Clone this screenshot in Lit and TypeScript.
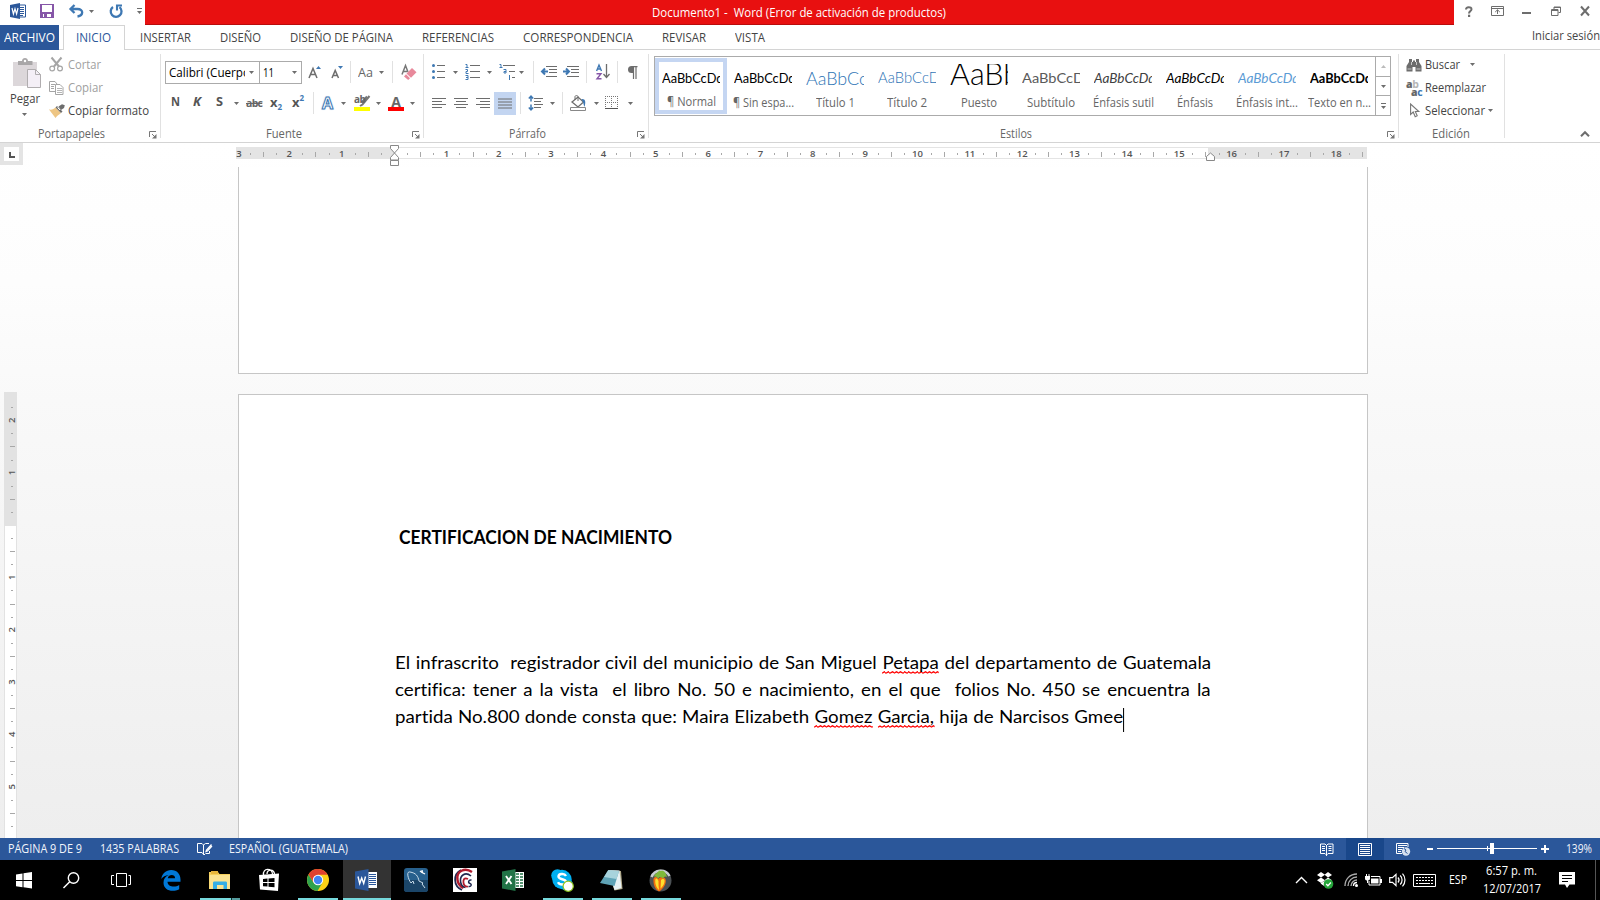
import { LitElement, html, svg, css } from "lit";
import { customElement, property } from "lit/decorators.js";
import { styleMap } from "lit/directives/style-map.js";

/** A run of text condensed or stretched to a given advance width. */
@customElement("fit-text")
class FitText extends LitElement {
  @property({ type: Number }) w = 0;
  @property() text = "";
  static styles = css`
    :host { display: block; white-space: pre; flex: none; }
    span { display: inline-block; transform-origin: 0 50%; white-space: pre; }
  `;
  render() {
    return html`<span>${this.text}</span>`;
  }
  updated() {
    const s = this.renderRoot.querySelector("span") as HTMLElement;
    s.style.transform = "none";
    const n = s.getBoundingClientRect().width;
    this.style.width = this.w + "px";
    if (n) s.style.transform = `scaleX(${this.w / n})`;
  }
}

const t = (text: string, w: number, cls = "") =>
  html`<fit-text class=${cls} .text=${text} .w=${w}></fit-text>`;

const icon = (w: number, h: number, body: unknown, cls = "") =>
  html`<svg class="ic ${cls}" width=${w} height=${h} viewBox="0 0 ${w} ${h}" fill="none">${body}</svg>`;

const arrow = () => icon(5, 3, svg`<path d="M0 0h5L2.500 3z" fill="#6d6d6d"/>`);
const sep = () => html`<i class="vsep"></i>`;
const launcher = () => icon(8, 8, svg`<path d="M.5 6V.5H7" stroke="#777"/><path d="M3 3l3.500 3.500" stroke="#777"/><path d="M7.500 3v4.500H3z" fill="#777"/>`, "launch");

const I = {
  word: icon(16, 16, svg`<path d="M8 2h7.500v12H8" stroke="#2b579a" fill="#fff"/><path d="M9 4.500h5M9 6.500h5M9 8.500h5M9 10.500h5M9 12.500h4" stroke="#2b579a"/><path d="M0 2l10-2v16L0 14z" fill="#2b579a"/><path d="M2 5l1.400 6L5 5.800 6.600 11 8 5" stroke="#fff" stroke-width="1.200"/>`),
  save: icon(14, 14, svg`<path d="M0 0h14v14H0z" fill="#8656a8"/><path d="M2 1h10v7H2z" fill="#fff"/><path d="M3 10h8v3H3z" fill="#fff"/><path d="M4 10h3v3H4z" fill="#8656a8"/>`),
  undo: icon(15, 14, svg`<path d="M5.500 1L1.500 5l4 4M2 5h6.500C15 5 14.500 11.500 8.500 12.500" stroke="#3e78b3" stroke-width="2.300"/>`),
  redo: icon(15, 14, svg`<path d="M4 3A5.400 5.400 0 1 0 10.500 3.200" stroke="#3e78b3" stroke-width="2.300"/><path d="M8 6.500V1.500h5" stroke="#3e78b3" stroke-width="2.100"/>`),
  qat: icon(5, 6, svg`<path d="M0 .5h5" stroke="#6d6d6d"/><path d="M0 3h5L2.500 6z" fill="#6d6d6d"/>`),
  help: icon(8, 11, svg`<path d="M1 3.500C1 .4 6.500.4 6.500 3.200 6.500 5 4 5 4 7.500" stroke="#6d6d6d" stroke-width="2"/><path d="M3 8.700h2.200V11H3z" fill="#6d6d6d"/>`),
  ribbonOpt: icon(13, 10, svg`<path d="M.5.500h12v9H.5zM1 2.500h11" stroke="#6d6d6d"/><path d="M6.500 8V4M4.200 6l2.300-2.200L8.800 6" stroke="#6d6d6d"/>`),
  min: icon(9, 10, svg`<path d="M0 7h9" stroke="#6d6d6d" stroke-width="2"/>`),
  restore: icon(10, 10, svg`<path d="M3 3V1h6.500v5.500H7.500M3 1.500h6.500" stroke="#6d6d6d"/><path d="M.5 3.500h6.500v6H.5zM.5 4.500H7" stroke="#6d6d6d"/>`),
  close: icon(10, 10, svg`<path d="M1 .5l8 9M9 .5l-8 9" stroke="#6d6d6d" stroke-width="2"/>`),
  paste: icon(28, 31, svg`<path d="M0 4h24v24H0z" fill="#dcd7da"/><path d="M5 3h4c0-4 6-4 6 0h4.500v4H5z" fill="#a9a7a8"/><circle cx="12" cy="3" r="1.200" fill="#fff"/><path d="M14.500 11.500h8l5 5v13h-13z" fill="#f4eff6" stroke="#b0adaf"/><path d="M22.500 11.500v5h5" stroke="#b0adaf"/>`),
  cut: icon(15, 15, svg`<path d="M2.500.500L10 9.500M12.500.500L5 9.500" stroke="#a5a5a5" stroke-width="2"/><circle cx="3.200" cy="11.500" r="2.400" stroke="#a5a5a5" stroke-width="1.200"/><circle cx="11" cy="11.500" r="2.400" stroke="#a5a5a5" stroke-width="1.200"/>`),
  copy: icon(15, 14, svg`<path d="M6 10.500H.5V.500H6L8 3" stroke="#a5a5a5"/><path d="M2 3.500h4M2 5.500h3M2 7.500h3" stroke="#a5a5a5"/><path d="M6.500 3.500H11l3 3v7H6.500z" stroke="#a5a5a5" fill="#fff"/><path d="M8 7.500h5M8 9.500h5M8 11.500h5" stroke="#b5b5b5"/>`),
  brush: icon(16, 14, svg`<path d="M0 5.500C3 6 5 5 6.500 3.500L12 9c-2 1.500-4 3-5.500 5z" fill="#eec684"/><path d="M6.500 3.500L12 9l1.500-1.500L8 2z" fill="#6d6d6d"/><path d="M9.500 2.500L13 .3 15.800 1.200 15 4l-3 2z" fill="#6d6d6d"/><path d="M8.500 3.500l2.500 2.500" stroke="#fff"/>`),
  grow: icon(14, 14, svg`<path d="M1 13L5 3.500 9 13M2.500 9.500h5" stroke="#6d6d6d" stroke-width="1.500"/><path d="M8 4l2.500-3L13 4z" fill="#3e78b3"/>`),
  shrink: icon(14, 14, svg`<path d="M1 13L4.200 5.500 7.500 13M2 10.500h4.500" stroke="#6d6d6d" stroke-width="1.500"/><path d="M7 1h5L9.500 4z" fill="#3e78b3"/>`),
  eraser: icon(16, 16, svg`<path d="M1 10.500L4.500 1.500 7 8M2 7.500h4" stroke="#777" stroke-width="1.500"/><path d="M5.500 9.500l5.500-5.500 4.500 4.200-5.500 5.500z" fill="#e8899b"/><path d="M3 12.500l2-2.200 4 4-1.800 1.700z" fill="#e8899b"/>`),
  abc: html`<span class="strike">abc</span>`,
  hilite: icon(17, 16, svg`<path d="M15.500 1L8.500 9.500 6 11M13 1.500L8 7" stroke="#777" stroke-width="2"/><path d="M0 12h16v4H0z" fill="#ff0"/>`),
  bullets: icon(14, 16, svg`<path d="M5 1.500h8M5 7.500h8M5 13.500h8" stroke="#6d6d6d"/><circle cx="1.500" cy="1.500" r="1.500" fill="#3e78b3"/><circle cx="1.500" cy="7.500" r="1.500" fill="#3e78b3"/><circle cx="1.500" cy="13.500" r="1.500" fill="#3e78b3"/>`),
  nums: icon(16, 16, svg`<path d="M5 1.500h10M5 7.500h10M5 13.500h10" stroke="#6d6d6d"/><path d="M.5.500H2v3.500M.5 3.500h3M.5 5.500h2v2H1v2h2.500M.5 11.500h2.500v4h-2.500M1 13.500h2" stroke="#3e78b3"/>`),
  multi: icon(17, 16, svg`<path d="M4 1.500h12M10 7.500h6M13 13.500h3" stroke="#6d6d6d"/><path d="M.5.500H2v3M.5 3.500h3M4.500 5.500h2.500v3.500H5V7.500h2M10.500 11v5M10 11.500h1" stroke="#3e78b3"/>`),
  outdent: icon(16, 12, svg`<path d="M5 .5h11M8 3.500h8M8 6.500h8M5 10.500h11" stroke="#6d6d6d"/><path d="M7 5.500H1M4 2.500L1 5.500l3 3" stroke="#3e78b3" stroke-width="2"/>`),
  indent: icon(16, 12, svg`<path d="M4 .5h12M8 3.500h8M8 6.500h8M4 10.500h12" stroke="#6d6d6d"/><path d="M0 5.500h6M3 2.500l3 3-3 3" stroke="#3e78b3" stroke-width="2"/>`),
  sort: icon(14, 16, svg`<path d="M.6 7L3 1l2.500 6M1.500 5h3" stroke="#3e78b3" stroke-width="1.400"/><path d="M.500 9.700h4.500L1 14.800h4.500" stroke="#8656a8" stroke-width="1.400"/><path d="M10.500 0v13M7.500 10l3 3.500 3-3.500" stroke="#6d6d6d" stroke-width="1.300"/>`),
  pil: icon(11, 13, svg`<path d="M10.500.600H5M6.500.500V13M9 .5V13" stroke="#6d6d6d" stroke-width="1.200"/><path d="M6.500 0H4.500a3.500 3.500 0 0 0 0 7h2z" fill="#6d6d6d"/>`),
  left: icon(14, 12, svg`<path d="M0 1.500h14M0 4.500h10M0 7.500h14M0 10.500h10" stroke="#6d6d6d"/>`),
  center: icon(14, 12, svg`<path d="M0 1.500h14M2 4.500h10M0 7.500h14M2 10.500h10" stroke="#6d6d6d"/>`),
  right: icon(14, 12, svg`<path d="M0 1.500h14M4 4.500h10M0 7.500h14M4 10.500h10" stroke="#6d6d6d"/>`),
  just: icon(14, 12, svg`<path d="M0 1h14M0 4h14M0 7h14M0 10h14" stroke="#6d6d6d"/>`),
  spacing: icon(15, 16, svg`<path d="M6 3.500h9M6 6.500h7M6 9.500h9M6 12.500h7" stroke="#6d6d6d"/><path d="M3 1v5.500M.8 3.500L3 1.200l2.200 2.300M3 9.500V15M.8 12.500L3 14.800l2.200-2.300" stroke="#3e78b3" stroke-width="1.500"/>`),
  bucket: icon(17, 16, svg`<path d="M2 7l6-5 5.500 5L8 12z" stroke="#6d6d6d" stroke-width="1.300" fill="#fff"/><path d="M5 5V1.500C5 .3 8 .3 8 1.500V6" stroke="#6d6d6d"/><path d="M11.500 4c4-.5 4.500 3 3 8-1-2-1-4-1.500-5z" fill="#3e78b3"/><path d="M.5 12.500h15v3H.5z" stroke="#888" fill="#fff"/>`),
  borders: icon(14, 14, svg`<path d="M.5 0v12M6.500 0v12M12.500 0v12M0 .5h13M0 6.500h13" stroke="#777" stroke-dasharray="1 1"/><path d="M0 12.500h13" stroke="#555"/>`),
  find: icon(16, 14, svg`<path d="M3 1h3v3h1V2.500h2V4h1V1h3v3l2.500 4v5.500H9.500V9h-3v4.500H.5V8L3 4z" fill="#6d6d6d"/><path d="M1.500 11h4M10.500 11h4M5.500 4v3M10.500 4v3" stroke="#ddd" stroke-width=".8"/>`),
  cursor: icon(10, 15, svg`<path d="M.6 1v10.500L3.200 9l2 4.700 2-.9L5.300 8.500h3.500z" stroke="#777" stroke-width="1.100" fill="#fff"/>`),
  collapse: icon(10, 6, svg`<path d="M1 5.200l4-4 4 4" stroke="#6d6d6d" stroke-width="2"/>`),
  proof: icon(16, 14, svg`<path d="M6.500 12V3L5 1.500H.500v9H5L7 13l1.500-1.500M6.500 3L8.500 1.500H12M12.500 9v2.500H9" stroke="#fff"/><path d="M14.500 2.500L9.500 8l-.5 1.500 1.500-.5 4.500-5" stroke="#fff" stroke-width="1.200"/>`),
  read: icon(14, 13, svg`<path d="M6.500 2v11M6.500 2.500L5 1H.500v9.500H5l1.500 1.500L8 10.500h5V1H8z" stroke="#fff"/><path d="M2 3.500h3M2 5.500h3M2 7.500h3M8.500 3.500h3M8.500 5.500h3M8.500 7.500h3" stroke="#fff"/>`),
  print: icon(14, 13, svg`<path d="M.5.500h13v12H.5z" stroke="#fff"/><path d="M2 2.500h10M2 4.500h10M2 6.500h10M2 8.500h10M2 10.500h10" stroke="#fff"/>`),
  web: icon(15, 13, svg`<path d="M12 4V.500H.500v10H6" stroke="#fff"/><path d="M2 2.500h9M2 4.500h6M2 6.500h4M2 8.500h3" stroke="#fff"/><circle cx="10" cy="8.500" r="4.200" fill="#d5e0ef"/><path d="M8 5.500l2 1.500-1 1.500 2.500 2" stroke="#2b579a" stroke-width="1"/>`),
};

const APPS = {
  win: icon(17, 17, svg`<path d="M0 2.500l6.500-1V8H0zM7.500 1.300L16 0v8H7.500zM0 9h6.500v6.300L0 14.300zM7.500 9H16v7.500l-8.500-1.200z" fill="#fff"/>`),
  search: icon(17, 17, svg`<circle cx="10.500" cy="6" r="5.200" stroke="#fff" stroke-width="1.400"/><path d="M6.700 9.800L.5 16" stroke="#fff" stroke-width="1.500"/>`),
  task: icon(20, 14, svg`<path d="M5.500.500h10v13h-10zM3 2.500H.500v9H3M17.500 2.500h2v9h-2" stroke="#fff"/>`),
  edge: icon(20, 21, svg`<path d="M.3 9C1 3.500 5 0 10.200 0 16 0 19.500 4.200 19.500 9.500v2.200H6.500c.2 5.300 7.500 6 11.700 3.300v4.200C11 23 2.500 20 2.500 12.700c0-3.600 2-6.200 5.200-7.600C4.500 5.500 1.700 7 .3 9zM6.800 8.200h7.300c0-4.500-6.600-4.300-7.300 0z" fill="#0078d7"/>`),
  folder: icon(22, 19, svg`<path d="M0 1h9l1.500 2H21v15H0z" fill="#f5cf5b"/><path d="M2 0h7v3H2z" fill="#e8b63b"/><path d="M.5 4H21v14H.5z" fill="#fbe391"/><path d="M4 18v-6c0-1 .5-1.500 1.500-1.500h11c1 0 1.500.5 1.500 1.500v6H14.500v-4H8v4z" fill="#35aee6"/>`),
  store: icon(22, 24, svg`<path d="M1 7l20-1.500L20 23 2 21.500z" fill="#fff"/><path d="M5.500 7C4.500-.5 14 0 14.500 6M9 6C9 .5 16 1 16.500 6" stroke="#fff" stroke-width="1.300"/><path d="M5 11l4.500-.5V14H5zM10.500 10.400l6-.5V14h-6zM5 15h4.500v3.600L5 18.200zM10.500 15h6v4.300l-6-.6z" fill="#000"/>`),
  chrome: icon(22, 22, svg`<circle cx="11" cy="11" r="11" fill="#fcd116"/><path d="M1.500 5.500A11 11 0 0 0 10.500 22L15.500 13.500 11 11 6.500 13.600z" fill="#2fa24d"/><path d="M1.500 5.500L6.500 13.600 11 11V5.800h9.600A11 11 0 0 0 1.500 5.500z" fill="#e0412f"/><circle cx="11" cy="11" r="5.200" fill="#fff"/><circle cx="11" cy="11" r="4.200" fill="#4284f3"/>`),
  word: icon(23, 22, svg`<path d="M12 3h10v16H12z" fill="#fff"/><path d="M14 5.500h7M14 7.500h7M14 9.500h7M14 11.500h7M14 13.500h7M14 15.500h7" stroke="#2b579a"/><path d="M0 2.500L13.500 0v22L0 19.500z" fill="#2b579a"/><path d="M3 7.500l1.700 7L6.700 9l2 5.500 1.800-7" stroke="#fff" stroke-width="1.400"/>`),
  mysql: icon(24, 24, svg`<rect width="24" height="24" rx="3" fill="#27608d"/><path d="M0 12h24v9a3 3 0 0 1-3 3H3a3 3 0 0 1-3-3z" fill="#1b4568"/><path d="M7 15c-3-4-5-12-1-11 6 1 8 4 9 9l4 2-1 1 3 4M7 15l2-2 1 3" stroke="#c9dcea" stroke-width="1"/><path d="M16 3l2 1.500L21 6M18 2l.5 3" stroke="#fff" stroke-width="1.300"/>`),
  cs: icon(24, 24, svg`<path d="M0 0h24v24H0z" fill="#fff"/><path d="M8 2C0 6 0 18 9 22" stroke="#20284f" stroke-width="1.800"/><path d="M19 4C12-1 3 3 4.500 12c.5 4 3 6.500 6 8" stroke="#b01c2e" stroke-width="2.400"/><path d="M18 8C12 3 7 8 7.500 13c.3 4 2.500 6 5 6.500" stroke="#20284f" stroke-width="1.600"/><path d="M15 11c-4-2-5 1-4.500 4 .5 3 2.500 4 4.500 3.500" stroke="#b01c2e" stroke-width="1.800"/><path d="M18.500 12c-3.500-.5-3.500 3-1.500 3.500s1.500 3.500-1.500 3" stroke="#20284f" stroke-width="1.500"/>`),
  excel: icon(23, 22, svg`<path d="M12 3h10v16H12z" fill="#fff"/><path d="M14 5h3M18 5h3M14 8h3M18 8h3M14 11h3M18 11h3M14 14h3M18 14h3M14 17h3M18 17h3" stroke="#217346" stroke-width="1.700"/><path d="M0 2.500L13.500 0v22L0 19.500z" fill="#217346"/><path d="M4 7l5.500 8M9.500 7L4 15" stroke="#fff" stroke-width="1.900"/>`),
  skype: icon(23, 23, svg`<circle cx="6.500" cy="6.500" r="6.300" fill="#00aff0"/><circle cx="15" cy="15" r="6.500" fill="#00aff0"/><circle cx="11" cy="10.500" r="9.700" fill="#00aff0"/><path d="M15 7c-1.500-3-7.500-2.500-7.500.5 0 3.500 7.500 2 7.500 5.500 0 3.200-6.500 3.500-8 .3" stroke="#fff" stroke-width="2.400"/><circle cx="17.200" cy="17.200" r="5.100" fill="#fff" stroke="#8cc21b" stroke-width="1.200"/>`),
  note: icon(23, 22, svg`<path d="M8 1l13 1 1.500 18-8 1.500z" fill="#b0a98c"/><path d="M8 1l11.500.5 2 17.500-7 2z" fill="#e8f1f3"/><path d="M8 1.500l11 .5-4.500 15L0 14z" fill="#5fa3b6"/><path d="M8 1.500l11 .5-2.500 8L4 8z" fill="#a8d3dc"/>`),
  fl: icon(23, 24, svg`<circle cx="11.500" cy="12.500" r="11" fill="#4b5054"/><path d="M2.500 9A10 10 0 0 1 20.500 8" stroke="#c8cdd0" stroke-width="2.500"/><path d="M4.500 11c1-3 4-2 5 0 1-2 5-3 7 0 1.500 4-2 10-6.500 12.500C6 21.500 4 16 4.500 11z" fill="#f36f10"/><path d="M6.500 11c1.500-1 2 0 3 2 0 3 0 6 .5 9-2.500-2-4.500-7-3.500-11zM12 12c1.500-1.500 3-1 3.500 0 .5 3-1.500 6.500-4 8.500z" fill="#ffe02e"/><path d="M4.500 9C6 5 9 5 10 2.500l2 .5c3-1 5 2 6 6-2-1.500-3.500 0-4 2-1-2.500-4-3-5 0-1-2.500-3-3-4.500-2z" fill="#7fb93a"/>`),
};

const TRAY = {
  up: icon(13, 8, svg`<path d="M1 7l5.500-5.500L12 7" stroke="#fff" stroke-width="1.400"/>`),
  dropbox: icon(17, 17, svg`<path d="M4 0l4 2.700L4 5.500 0 3zM11 0L7.500 2.700 11 5.500 15 3zM4 5.500L8 8.300 4 11 0 8.300zM11 5.500l4 2.800L11 11 7.500 8.300zM3.500 11.500L7.500 9l4 2.500-4 2.700z" fill="#fff"/><circle cx="11.500" cy="12" r="4.800" fill="#25a53a"/><path d="M9.200 12l1.700 1.700 3-3.200" stroke="#fff" stroke-width="1.300"/>`),
  wifi: icon(14, 14, svg`<path d="M1 13C1 6 6 1 13 1M4 13c0-5 4-9 9-9M7 13c0-3.500 3-6 6-6" stroke="#aaa" stroke-width="1.400"/><path d="M9.500 13c0-2 1.500-3.500 3.500-3.500" stroke="#fff" stroke-width="1.400"/><circle cx="12.500" cy="12.500" r="1.500" fill="#fff"/>`),
  battery: icon(17, 12, svg`<path d="M6 2.500h9v8.500H4V7" stroke="#fff"/><path d="M6 4.500h7.500V9.500H6z" fill="#fff"/><path d="M15 5h2v4h-2zM0 2h5v2.500C5 6 4 6.500 2.500 6.500S0 6 0 4.500zM1 0h1v2H1zM3.500 0h1v2h-1zM2 6h1v3H2z" fill="#fff"/>`),
  volume: icon(17, 14, svg`<path d="M.7 4.700H3.500L7 1.300v11.400L3.500 9.300H.700z" stroke="#fff" stroke-width="1.200"/><path d="M9 4.500c1.300 1.500 1.300 3.500 0 5M11.200 2.500c2.500 2.500 2.500 6.500 0 9M13.500.700c3.300 3.600 3.300 9 0 12.600" stroke="#fff" stroke-width="1.200"/>`),
  keyboard: icon(23, 13, svg`<path d="M.5.500h22v12H.5z" stroke="#fff"/><path d="M3 3.500h17M3 6.500h17" stroke="#fff" stroke-dasharray="2 1"/><path d="M3 9.500h2M6 9.500h11M18 9.500h2" stroke="#fff"/>`),
  action: icon(16, 16, svg`<path d="M0 0h16v12.500H10.500L8 16 6 12.500H0z" fill="#fff"/><path d="M3 3.500h10M3 6.500h10M3 9.500h6" stroke="#000"/>`),
};

const STEP = 52.35;
const DOC = {
  first: "El infrascrito  registrador civil del municipio de San Miguel |Petapa| del departamento de Guatemala",
  second: "certifica: tener a la vista  el libro No. 50 e nacimiento, en el que  folios No. 450 se encuentra la",
  third: "partida No.800 donde consta que: Maira Elizabeth |Gomez| |Garcia,| hija de Narcisos Gmee",
};
const TRACK = 0.01;
const FONT = "18.200px Lato";
const measure = (s: string) => {
  const c = document.createElement("canvas").getContext("2d")! as any;
  c.font = FONT;
  c.letterSpacing = TRACK + "px";
  return c.measureText(s.replace(/\|/g, "")).width;
};
const spaces = (s: string) => s.split(" ").length - 1;

const STYLES: [string, number, string, string, number][] = [
  ["¶ Normal", 49, "AaBbCcDd", "", 61.5],
  ["¶ Sin espa...", 61, "AaBbCcDd", "", 61.5],
  ["Título 1", 39, "AaBbCc", "h1", 61.5],
  ["Título 2", 40, "AaBbCcD", "h2", 62],
  ["Puesto", 36, "AaBb", "title", 70],
  ["Subtítulo", 48, "AaBbCcD", "sub", 62],
  ["Énfasis sutil", 61, "AaBbCcDd", "em soft", 61.5],
  ["Énfasis", 36, "AaBbCcDd", "em", 61.5],
  ["Énfasis int...", 62, "AaBbCcDd", "em blue", 61.5],
  ["Texto en n...", 63, "AaBbCcDd", "strong", 62],
];

@customElement("app-root")
class AppRoot extends LitElement {
  static styles = css`
    :host { display: flex; flex-direction: column; width: 1600px; height: 900px; overflow: hidden; background: #fff; color: #444;
      font: 12px/16px "Open Sans", "Noto Sans", sans-serif; }
    * { box-sizing: border-box; }
    .ic { display: block; flex: none; overflow: visible; }
    .titlebar { display: grid; grid-template-columns: 145px 1309px 146px; height: 25px; flex: none; }
    .qat { display: grid; grid-template-columns: 30px 29px 20px 20px 28px 5px; padding-left: 10px; height: 22px; align-items: center; }
    .title { background: #e81010; border-bottom: 1px solid #b90c0c; color: #fff; display: flex; justify-content: center; align-items: center; padding: 2px 2px 0 0; }
    .win { display: grid; grid-template-columns: 26px 31px 29px 29px 10px; padding-left: 11px; height: 22px; align-items: center; }
    .tabs { display: flex; height: 25px; flex: none; border-bottom: 1px solid #d4d4d4; font-size: 12.500px; align-items: flex-start; }
    .tabs > * { height: 25px; display: flex; align-items: center; flex: none; }
    .file { background: #2b579a; color: #fff; width: 59px; padding-left: 4px; }
    .active { background: #fff; color: #2b579a; border: 1px solid #d4d4d4; border-bottom: 0; width: 62px; margin-left: 4px; padding-left: 12px; }
    .names { display: grid; grid-template-columns: 80px 70px 132px 101px 139px 73px 797px 68px; padding-left: 15px; }
    .login { padding-bottom: 4px; font-size: 12px; }
    .ribbon { display: flex; height: 93px; flex: none; border-bottom: 1px solid #d4d4d4; }
    .group { display: flex; flex-direction: column; flex: none; position: relative; padding-top: 10px; }
    .group::after { content: ""; position: absolute; right: 0; top: 4px; height: 84px; width: 1px; background: #e1e1e1; }
    .g1 { width: 161px; } .g2 { width: 263px; } .g3 { width: 225px; } .g4 { width: 750px; } .g5 { width: 106px; }
    .foot { display: grid; align-items: center; height: 16px; margin-top: auto; color: #666; }
    .foot .launch { margin-top: 1px; }
    .g1 .foot { grid-template-columns: 111px 8px; padding-left: 38px; }
    .g2 .foot { grid-template-columns: 146px 8px; padding-left: 105px; }
    .g3 .foot { grid-template-columns: 128px 8px; padding-left: 85px; }
    .g4 .foot { grid-template-columns: 387px 8px; padding-left: 351px; }
    .g5 .foot { padding-left: 33px; }
    .clip { display: grid; grid-template-columns: 36px 96px; padding-left: 13px; height: 65px; margin-top: -7px; }
    .pastecol { padding-top: 5px; width: 40px; }
    .pegar { margin: 2px 0 0 -3px; }
    .pastecol .down { margin: 6px 0 0 9px; }
    .line { display: grid; grid-template-columns: 19px auto; align-items: center; height: 23px; }
    .off { color: #a0a0a0; }
    .row { display: grid; align-items: center; height: 24px; margin-bottom: 7px; }
    .f1 { grid-template-columns: 94px 43px 6px 23px 19px 8px 21px 13px 9px 16px; padding-left: 4px; }
    .f2 { grid-template-columns: 22px 23px 18px 12px 24px 22px 21px 9px 19px 13px 22px 12px 22px 5px; padding-left: 10px; }
    .f2 fit-text { margin-top: -2px; }
    .p1 { grid-template-columns: 21px 12px 22px 12px 20px 14px 8px 22px 23px 10px 21px 10px 11px; padding-left: 8px; }
    .p2 { grid-template-columns: 22px 22px 18px 26px 8px 22px 12px 8px 24px 11px 23px 5px; padding-left: 8px; }
    .box { height: 23px; border: 1px solid #ababab; display: flex; align-items: center; color: #000; margin-top: 1px; justify-content: space-between; padding: 0 4px 0 3px; }
    .box .cut { width: 76px; overflow: hidden; }
    .fontbox { width: 95px; padding-right: 5px; }
    .vsep { width: 1px; height: 22px; background: #e1e1e1; display: block; }
    .b { font-weight: 700; font-size: 12.500px; color: #555; }
    .i { font-style: italic; }
    .u { text-decoration: underline; text-underline-offset: 2px; }
    .strike { font: 700 10.500px/12px "Open Sans", sans-serif; letter-spacing: -.7px; text-decoration: line-through; color: #666; }
    .mini { font-size: 8px; color: #3e78b3; font-weight: 700; }
    .xx { display: flex; font-weight: 700; font-size: 13px; color: #555; align-items: center; margin-top: -2px; }
    .lo .mini { margin-top: 9px; } .hi .mini { margin-top: -8px; }
    .outline { font: 700 16px/18px "Open Sans", sans-serif; color: #fff; -webkit-text-stroke: 1px #3e78b3; text-shadow: 0 0 2px #8ab4e0; margin-top: -1px; }
    .aa { font-size: 13px; color: #666; }
    .hl, .fc { position: relative; height: 16px; }
    .hl > span { position: absolute; left: 0; top: -3px; font: 700 10px/14px "Open Sans", sans-serif; color: #666; letter-spacing: -.5px; }
    .fc { width: 16px; border-bottom: 4px solid #f00; font: 700 14px/13px "Open Sans", sans-serif; color: #666; text-align: center; }
    .on { background: #c3d5f1; width: 22px; height: 23px; display: flex; align-items: center; justify-content: center; margin-top: 1px; }
    .gallery { display: flex; width: 737px; height: 60px; border: 1px solid #ababab; margin: -4px 0 0 5px; }
    .style { width: 72px; height: 58px; flex: none; display: flex; flex-direction: column; align-items: center; color: #666; margin-top: 1px; }
    .style.sel { border: 4px solid #c5d6f2; height: 56px; }
    .style.sel .prev { margin-top: 2px; }
    .prev { width: 58px; height: 24px; margin-top: 6px; overflow: hidden; color: #000; font: 13.300px/29px Lato, sans-serif; }
    .prev fit-text { margin-left: -.5px; }
    .cap { margin-top: 7px; }
    .h1 { font-size: 18px; font-weight: 300; color: #2e74b5; line-height: 28px; }
    .h2 { font-size: 15.500px; font-weight: 300; color: #2e74b5; line-height: 26px; }
    .prev.title { display: block; background: none; border: 0; padding: 0; font-size: 32px; font-weight: 300; line-height: 18px; }
    .sub { color: #5a5a5a; } .em { font-style: italic; } .soft { color: #404040; } .blue { color: #5b9bd5; } .strong { font-weight: 700; }
    .scroll { width: 15px; border-left: 1px solid #ababab; display: grid; grid-template-rows: 20px 19px 19px; }
    .scroll > div { display: flex; align-items: center; justify-content: center; border-bottom: 1px solid #ababab; }
    .scroll > div:last-child { border: 0; }
    .edit { padding-left: 7px; margin-top: -7px; }
    .edit .line { grid-template-columns: 19px 45px 18px 5px; }
    .edit .line.s { grid-template-columns: 4px 15px 63px 5px; }
    .rep { width: 16px; height: 16px; font: 700 10.500px/8px "Open Sans", sans-serif; letter-spacing: -.4px; }
    .rep div + div { padding-left: 5px; color: #3e78b3; }
    .rep i { color: #b5b5b5; font-style: normal; }
    .rep b { color: #666; }
    .end { flex: 1; display: flex; justify-content: flex-end; align-items: flex-end; padding: 0 10px 5px 0; }
    .work { height: 695px; flex: none; display: flex; flex-direction: column; background: linear-gradient(#fff, #fdfdfd 20%, #f9f9f9 37%, #eee); }
    .rulerrow { display: flex; height: 24px; flex: none; }
    .corner { width: 23px; height: 22px; background: #e4e4e4; padding: 4px; }
    .corner div { width: 15px; height: 14px; background: #fff; padding: 5px; }
    .hruler { margin-left: 213px; }
    .rnum { font: 600 9.500px "Open Sans", sans-serif; fill: #555; }
    .canvas { display: flex; flex: 1; }
    .vruler { margin: 225px 0 0 4px; width: 13px; }
    .pages { margin-left: 221px; width: 1130px; display: flex; flex-direction: column; gap: 20px; }
    .page { background: #fff; border: 1px solid #c6c6c6; }
    .pg1 { height: 207px; border-top: 0; flex: none; }
    .pg2 { flex: 1; border-bottom: 0; color: #000; font: 18.200px/27px Lato, sans-serif; padding: 128px 0 0 156px; }
    .pg2 h1 { font: 700 18.400px/27px Lato, sans-serif; margin: 1px 0 98px 4px; }
    .para { height: 27px; white-space: pre; transform-origin: 0 50%; width: max-content; letter-spacing: .01px; font-variant-ligatures: none; }
    .err { background: url("data:image/svg+xml,%3Csvg xmlns='http://www.w3.org/2000/svg' width='4' height='3'%3E%3Cpath d='M0 2.300L2 .700L4 2.300' fill='none' stroke='red' stroke-width='1.100'/%3E%3C/svg%3E") repeat-x 0 100%; padding-bottom: 1px; }
    .caret { display: inline-block; width: 1px; height: 24px; background: #000; vertical-align: -5px; margin: -4px 0; }
    .status { height: 22px; flex: none; background: #2b579a; color: #f2f5fa; display: grid; align-items: center;
      grid-template-columns: 92px 97px 32px 1091px 26px 38px 12px 31px 10px 104px 25px 34px; padding-left: 8px; }
    .status fit-text { margin-top: -1px; }
    .view { background: #19478a; width: 38px; height: 22px; display: flex; align-items: center; justify-content: center; }
    .taskbar { height: 40px; flex: none; background: #000; color: #fff; display: flex; }
    .apps { display: grid; grid-template-columns: 48px 48px 51px repeat(11, 49px); width: 1295px; }
    .app { display: flex; align-items: center; justify-content: center; height: 40px; position: relative; padding-right: 2px; }
    .app:first-child { padding-right: 0; }
    .app.run::after, .app.cur::after { content: ""; position: absolute; bottom: 0; left: 4px; right: 5px; height: 2px; background: #76d9dc; }
    .app.cur { background: #333; margin-right: 1px; }
    .app.cur::after { left: 0; right: 0; }
    .app.many::after { background: linear-gradient(90deg, #76d9dc 31px, #102c2c 31px, #102c2c 32px, #559c9e 32px); }
    .tray { display: grid; align-items: center; grid-template-columns: 22px 27px 21px 24px 24px 36px 34px 76px 36px 1px; height: 40px; }
    .clock { display: flex; flex-direction: column; gap: 2px; }
    .clock fit-text:first-child { margin-left: 3px; }
    .show { width: 1px; height: 40px; background: #555; }
  `;

  private hruler() {
    const items = [];
    for (let q = -12; q <= 74; q++) {
      const x = 158 + (q * STEP) / 4;
      if (q === 0) continue;
      if (q % 4 === 0) items.push(svg`<text class="rnum" x=${q === -12 ? 3 : x} y="14" text-anchor="middle">${Math.abs(q / 4)}</text>`);
      else if (x < 1131) items.push(svg`<rect x=${Math.round(x)} y=${q % 2 ? 10 : 9} width="1" height=${q % 2 ? 2 : 5} fill="#a8a8a8"/>`);
    }
    return html`<svg class="hruler" width="1132" height="24" viewBox="0 0 1132 24">
      <rect y="4" width="1131" height="12" fill="#e4e4e4"/><rect x="158" y="5" width="814" height="10" fill="#fff"/>
      ${items}
      <path d="M154.500 2.500h8v3l-4 4.500 4 4.500v2.500h-8v-2.500l4-4.500-4-4.500zM154.500 17.500h8v5h-8z" fill="#fff" stroke="#888"/>
      <path d="M970.500 17.500v-4l4-3.500 4 3.500v4z" fill="#fff" stroke="#888"/>
    </svg>`;
  }

  private vruler() {
    const items = [];
    for (let q = -9; q <= 23; q++) {
      const y = 133 + (q * STEP) / 4;
      if (q === 0) continue;
      if (q % 4 === 0) items.push(svg`<text class="rnum" transform="translate(11 ${y}) rotate(-90)" text-anchor="middle">${Math.abs(q / 4)}</text>`);
      else items.push(svg`<rect x=${q % 2 ? 7 : 6} y=${Math.round(y)} width=${q % 2 ? 2 : 5} height="1" fill="#a8a8a8"/>`);
    }
    return html`<svg class="vruler" width="13" height="446" viewBox="0 0 13 446">
      <rect width="13" height="446" fill="#e2e2e2"/><rect x="1" y="134" width="11" height="312" fill="#fff"/>${items}</svg>`;
  }

  private para(s: string, width: number, scale: number) {
    const ws = (width / scale - measure(s)) / spaces(s);
    const parts = s.split("|").map((p, i) => (i % 2 && p.trim() ? html`<span class="err">${p}</span>` : p));
    return html`<div class="para" style=${styleMap({ wordSpacing: ws + "px", transform: `scaleX(${scale})` })}>${parts}${s === DOC.third ? html`<span class="caret"></span>` : ""}</div>`;
  }

  render() {
    const scale = 728 / (measure(DOC.third) + spaces(DOC.third) * 0.4);
    return html`
      <div class="titlebar">
        <div class="qat">${I.word}${I.save}${I.undo}${arrow()}${I.redo}${I.qat}</div>
        <div class="title">${t("Documento1 -  Word (Error de activación de productos)", 294)}</div>
        <div class="win">${I.help}${I.ribbonOpt}${I.min}${I.restore}${I.close}</div>
      </div>
      <div class="tabs">
        <div class="file">${t("ARCHIVO", 51)}</div>
        <div class="active">${t("INICIO", 35)}</div>
        <div class="names">${t("INSERTAR", 51)}${t("DISEÑO", 41)}${t("DISEÑO DE PÁGINA", 103)}${t("REFERENCIAS", 72)}${t("CORRESPONDENCIA", 110)}${t("REVISAR", 44)}${t("VISTA", 30)}${t("Iniciar sesión", 68, "login")}</div>
      </div>
      <div class="ribbon">
        <div class="group g1">
          <div class="clip">
            <div class="pastecol">${I.paste}<div class="pegar">${t("Pegar", 30)}</div><div class="down">${arrow()}</div></div>
            <div>
              <div class="line off">${I.cut}${t("Cortar", 33)}</div>
              <div class="line off">${I.copy}${t("Copiar", 35)}</div>
              <div class="line">${I.brush}${t("Copiar formato", 81)}</div>
            </div>
          </div>
          <div class="foot">${t("Portapapeles", 67)}${launcher()}</div>
        </div>
        <div class="group g2">
          <div class="row f1">
            <div class="box fontbox"><div class="cut">${t("Calibri (Cuerpo", 81)}</div>${arrow()}</div>
            <div class="box">${t("11", 11)}${arrow()}</div><i></i>
            ${I.grow}${I.shrink}${sep()}${t("Aa", 15, "aa")}${arrow()}${sep()}${I.eraser}
          </div>
          <div class="row f2">
            ${t("N", 9, "b")}${t("K", 8, "b i")}${t("S", 7, "b u")}${arrow()}${I.abc}
            <span class="xx lo">x<span class="mini">2</span></span><span class="xx hi">x<span class="mini">2</span></span>
            ${sep()}<span class="outline">A</span>${arrow()}
            <span class="hl"><span>ab</span>${I.hilite}</span>${arrow()}<span class="fc">A</span>${arrow()}
          </div>
          <div class="foot">${t("Fuente", 36)}${launcher()}</div>
        </div>
        <div class="group g3">
          <div class="row p1">${I.bullets}${arrow()}${I.nums}${arrow()}${I.multi}${arrow()}${sep()}${I.outdent}${I.indent}${sep()}${I.sort}${sep()}${I.pil}</div>
          <div class="row p2">${I.left}${I.center}${I.right}<div class="on">${I.just}</div>${sep()}${I.spacing}${arrow()}${sep()}${I.bucket}${arrow()}${I.borders}${arrow()}</div>
          <div class="foot">${t("Párrafo", 37)}${launcher()}</div>
        </div>
        <div class="group g4">
          <div class="gallery">
            ${STYLES.map(([name, w, sample, cls, sw], i) => html`<div class="style ${i ? "" : "sel"}"><div class="prev ${cls}">${t(sample, sw)}</div><div class="cap">${t(name, w)}</div></div>`)}
            <div class="scroll">
              <div>${icon(5, 3, svg`<path d="M0 3h5L2.500 0z" fill="#bbb"/>`)}</div>
              <div>${arrow()}</div>
              <div>${I.qat}</div>
            </div>
          </div>
          <div class="foot">${t("Estilos", 32)}${launcher()}</div>
        </div>
        <div class="group g5">
          <div class="edit">
            <div class="line">${I.find}${t("Buscar", 35)}${arrow()}</div>
            <div class="line"><div class="rep"><div><b>a</b><i>b</i></div><div><b>a</b>c</div></div>${t("Reemplazar", 61)}</div>
            <div class="line s"><i></i>${I.cursor}${t("Seleccionar", 60)}${arrow()}</div>
          </div>
          <div class="foot">${t("Edición", 38)}</div>
        </div>
        <div class="end">${I.collapse}</div>
      </div>
      <div class="work">
        <div class="rulerrow">
          <div class="corner"><div>${icon(6, 6, svg`<path d="M1 0v5h5" stroke="#555" stroke-width="2"/>`)}</div></div>
          ${this.hruler()}
        </div>
        <div class="canvas">
          ${this.vruler()}
          <div class="pages">
            <div class="page pg1"></div>
            <div class="page pg2">
              <h1>${t("CERTIFICACION DE NACIMIENTO", 273)}</h1>
              ${this.para(DOC.first, 816.5, scale)}${this.para(DOC.second, 816.5, scale)}${this.para(DOC.third, 728, scale)}
            </div>
          </div>
        </div>
      </div>
      <div class="status">
        ${t("PÁGINA 9 DE 9", 74)}${t("1435 PALABRAS", 79)}${I.proof}${t("ESPAÑOL (GUATEMALA)", 119)}
        ${I.read}<div class="view">${I.print}</div><i></i>${I.web}<i></i>
        ${icon(100, 12, svg`<path d="M0 5.500h100M50.500 3v5" stroke="#fff"/><path d="M-10 6h6M104 6h8M108 2v8" stroke="#fff" stroke-width="2"/><path d="M53 0h4v11h-4z" fill="#fff"/>`)}
        <i></i>${t("139%", 26)}
      </div>
      <div class="taskbar">
        <div class="apps">
          <div class="app">${APPS.win}</div><div class="app">${APPS.search}</div><div class="app">${APPS.task}</div>
          <div class="app">${APPS.edge}</div><div class="app run many">${APPS.folder}</div><div class="app">${APPS.store}</div>
          <div class="app run">${APPS.chrome}</div><div class="app cur">${APPS.word}</div><div class="app">${APPS.mysql}</div>
          <div class="app">${APPS.cs}</div><div class="app">${APPS.excel}</div><div class="app run">${APPS.skype}</div>
          <div class="app run">${APPS.note}</div><div class="app run">${APPS.fl}</div>
        </div>
        <div class="tray">
          ${TRAY.up}${TRAY.dropbox}${TRAY.wifi}${TRAY.battery}${TRAY.volume}${TRAY.keyboard}${t("ESP", 18)}
          <div class="clock">${t("6:57 p. m.", 51)}${t("12/07/2017", 58)}</div>${TRAY.action}<i class="show"></i>
        </div>
      </div>`;
  }
}
